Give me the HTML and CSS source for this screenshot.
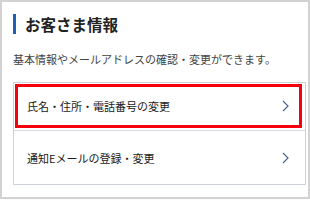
FILE: index.html
```html
<!DOCTYPE html>
<html lang="ja">
<head>
<meta charset="UTF-8" />
<title>お客さま情報</title>
<link rel="stylesheet" href="styles.css">
</head>
<body>

<!-- Customer info card -->
<div class="frame">
  <h2 class="title">お客さま情報</h2>
  <p class="desc">基本情報やメールアドレスの確認・変更ができます。</p>
  <ul class="menu">
    <li class="menu-row first">
      <a class="menu-link highlight" href="#">
        <span>氏名・住所・電話番号の変更</span>
        <svg class="chevron" width="7" height="12" viewBox="0 0 7 12"><polyline points="1,1 6,6 1,11" /></svg>
      </a>
    </li>
    <li class="menu-row">
      <a class="menu-link" href="#">
        <span>通知Eメールの登録・変更</span>
        <svg class="chevron" width="7" height="12" viewBox="0 0 7 12"><polyline points="1,1 6,6 1,11" /></svg>
      </a>
    </li>
  </ul>
</div>

</body>
</html>
```
FILE: styles.css
```css
body {
  margin: 0;
  background: #fff;
  font-family: "Noto Sans CJK JP", "Noto Sans", sans-serif;
  color: #222;
}

.frame {
  box-sizing: border-box;
  width: 310px;
  height: 199px;
  padding: 12px 0 0 11px;
  border: 2px solid #d2d2d2;
}

.title {
  margin: 0;
  padding-left: 9px;
  border-left: 3px solid #1e5fb8;
  font-size: 15.5px;
  font-weight: bold;
  line-height: 20px;
}

.desc {
  margin: 17px 0 0;
  font-size: 11px;
  line-height: 16px;
  color: #444;
}

.menu {
  list-style: none;
  margin: 15px 0 0;
  padding: 0;
  width: 293px;
  box-sizing: border-box;
  border: 1px solid #cdd1d8;
}

.menu-row {
  border-top: 1px solid #d5d9e0;
}
.menu-row.first {
  border-top: none;
  padding: 1px 3px 2px 1px;
}

.menu-link {
  display: flex;
  justify-content: space-between;
  align-items: center;
  height: 53px;
  padding: 0 16px 0 13px;
  color: #1a1a1a;
  text-decoration: none;
  font-size: 11px;
}

.menu-link.highlight {
  box-sizing: border-box;
  height: 44px;
  padding: 0 10px 0 9px;
  border: 3px solid #f5000c;
}

.chevron polyline {
  fill: none;
  stroke: #4d6690;
  stroke-width: 1.2;
}
```
